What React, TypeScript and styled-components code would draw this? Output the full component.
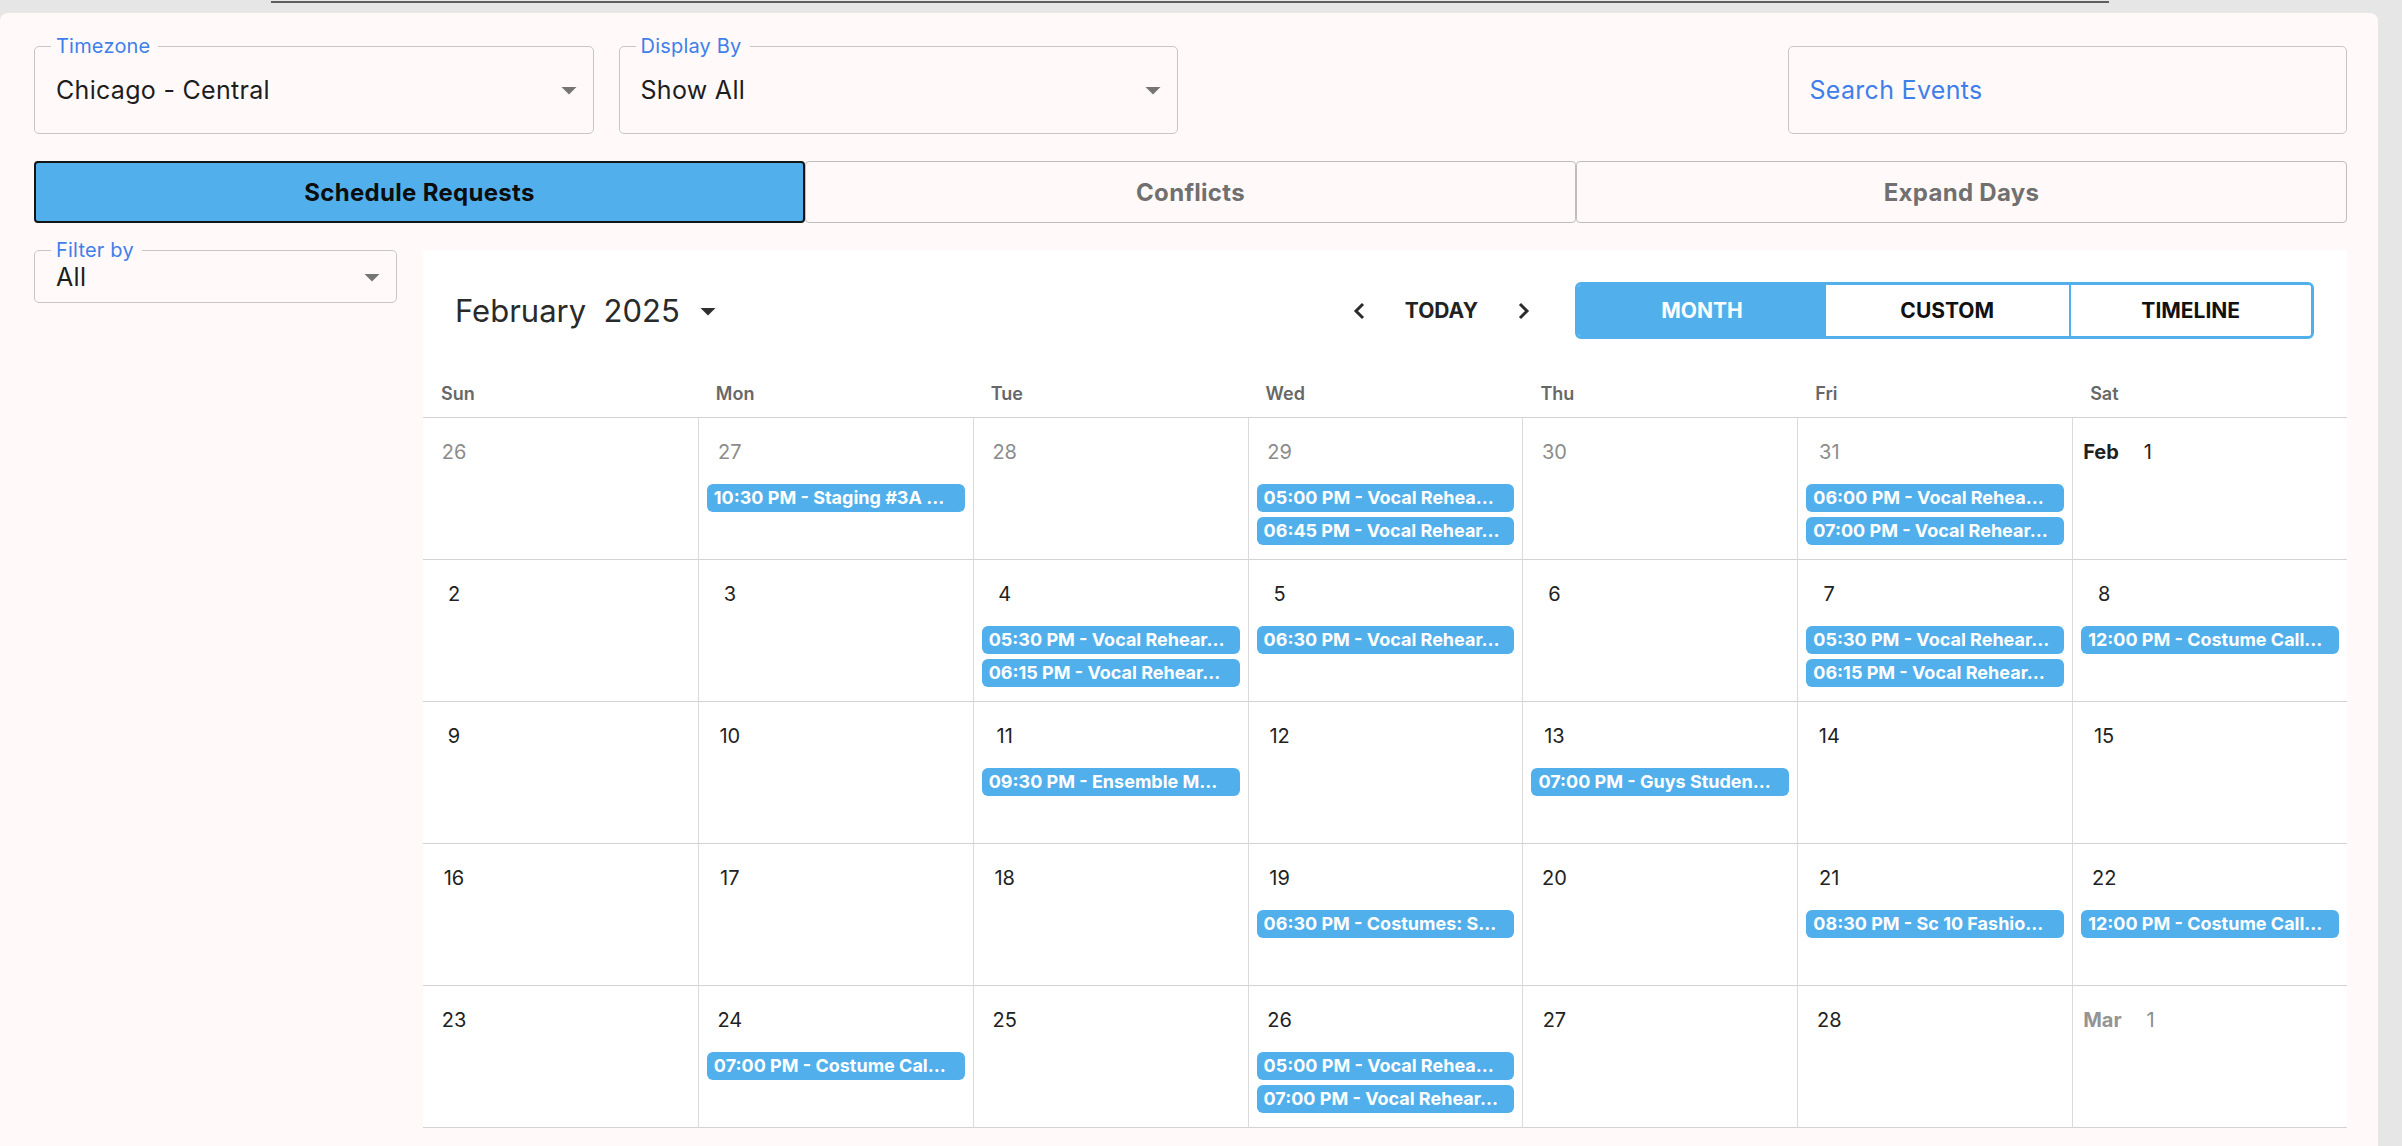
import React from "react";
import styled, { createGlobalStyle } from "styled-components";

const BLUE = "#51b0ec";
const LABEL_BLUE = "#3f7fe9";
const CARD_BG = "#fffaf9";
const FONT = `"Inter", "DejaVu Sans", sans-serif`;

const GlobalStyle = createGlobalStyle`
  html, body {
    margin: 0;
    padding: 0;
    background: #e6e6e6;
    font-family: ${FONT};
  }
  * { box-sizing: border-box; }
`;

const Page = styled.div`
  display: flex;
  flex-direction: column;
  min-height: 1146px;
`;

const TopStrip = styled.div`
  height: 13px;
  padding-top: 1px;
`;

const ScrollThumb = styled.div`
  margin-left: 271px;
  width: 1838px;
  height: 2px;
  background: #5e5e5e;
`;

const Card = styled.main`
  flex: 1;
  margin-right: 24px;
  background: ${CARD_BG};
  border-radius: 8px 8px 0 0;
  padding: 33px 31px 0 34px;
`;

const FilterGrid = styled.div`
  display: grid;
  grid-template-columns: repeat(4, 1fr);
  gap: 25px;
`;

const Field = styled.div<{ $height: number }>`
  position: relative;
  height: ${(p) => p.$height}px;
  border: 1.5px solid #c6c6c6;
  border-radius: 5px;
  display: flex;
  align-items: center;
  padding: 0 6px 0 21px;
`;

const FloatLabel = styled.span`
  position: absolute;
  top: -13px;
  left: 16px;
  padding: 0 8px 0 5px;
  background: ${CARD_BG};
  color: ${LABEL_BLUE};
  font-size: 20px;
  letter-spacing: 0.2px;
  line-height: 24px;
`;

const FieldValue = styled.span<{ $muted?: boolean }>`
  flex: 1;
  font-size: 25px;
  letter-spacing: 0.3px;
  color: ${(p) => (p.$muted ? LABEL_BLUE : "#1d1d1d")};
`;

const Caret = ({ color = "#757575" }: { color?: string }) => (
  <svg width="36" height="36" viewBox="0 0 24 24" aria-hidden="true">
    <path d="M7 10l5 5 5-5z" fill={color} />
  </svg>
);

const Select = ({
  label,
  value,
  height = 88,
}: {
  label: string;
  value: string;
  height?: number;
}) => (
  <Field $height={height}>
    <FloatLabel>{label}</FloatLabel>
    <FieldValue>{value}</FieldValue>
    <Caret />
  </Field>
);

const TabRow = styled.div`
  margin-top: 27px;
  display: grid;
  grid-template-columns: repeat(3, 1fr);
  height: 62px;
`;

const Tab = styled.button<{ $active?: boolean }>`
  font-family: ${FONT};
  font-size: 24px;
  letter-spacing: 0.3px;
  font-weight: 700;
  border-radius: 4px;
  cursor: pointer;
  background: ${(p) => (p.$active ? BLUE : CARD_BG)};
  color: ${(p) => (p.$active ? "#0d0d0d" : "#707070")};
  border: ${(p) => (p.$active ? "2px solid #151515" : "1.5px solid #bdbdbd")};
`;

const Body = styled.div`
  margin-top: 27px;
  display: flex;
  gap: 26px;
  align-items: flex-start;
`;

const Sidebar = styled.aside`
  width: 363px;
  flex: none;
`;

const Calendar = styled.section`
  flex: 1;
  background: #ffffff;
  padding-top: 32px;
`;

const Toolbar = styled.div`
  height: 57px;
  padding: 0 33px 0 32px;
  display: flex;
  align-items: center;
  justify-content: space-between;
`;

const MonthTitle = styled.button`
  display: flex;
  align-items: center;
  gap: 10px;
  border: none;
  background: none;
  padding: 0;
  font-family: ${FONT};
  font-size: 31px;
  color: #2a2a2a;
  white-space: pre;
  cursor: pointer;
`;

const Controls = styled.div`
  display: flex;
  align-items: center;
  height: 100%;
`;

const Nav = styled.div`
  display: flex;
  align-items: center;
  margin-right: 29px;
`;

const NavArrow = styled.button`
  width: 44px;
  height: 44px;
  border: none;
  background: none;
  display: flex;
  align-items: center;
  justify-content: center;
  cursor: pointer;
`;

const TodayButton = styled.button`
  border: none;
  background: none;
  padding: 0 24px;
  font-family: ${FONT};
  font-size: 21px;
  font-weight: 700;
  color: #222;
  cursor: pointer;
`;

const Chevron = ({ dir }: { dir: "left" | "right" }) => (
  <svg width="12" height="18" viewBox="0 0 12 18" aria-hidden="true">
    <polyline
      points={dir === "left" ? "10,2 3,9 10,16" : "2,2 9,9 2,16"}
      fill="none"
      stroke="#2b2b2b"
      strokeWidth="3"
    />
  </svg>
);

const ViewSwitch = styled.div`
  width: 739px;
  height: 57px;
  border: 3px solid ${BLUE};
  border-radius: 6px;
  overflow: hidden;
  display: grid;
  grid-template-columns: 248px 1fr 1fr;
`;

const ViewButton = styled.button<{ $active?: boolean; $divider?: boolean }>`
  border: none;
  border-left: ${(p) => (p.$divider ? `2px solid ${BLUE}` : "none")};
  background: ${(p) => (p.$active ? BLUE : "#ffffff")};
  color: ${(p) => (p.$active ? "#ffffff" : "#111111")};
  font-family: ${FONT};
  font-size: 21px;
  font-weight: 700;
  cursor: pointer;
`;

const WeekHeader = styled.div`
  margin-top: 31px;
  height: 48px;
  display: grid;
  grid-template-columns: repeat(7, 1fr);
  border-bottom: 1px solid #d2d2d2;
`;

const WeekDay = styled.div`
  display: flex;
  align-items: center;
  padding-left: 18px;
  font-size: 18px;
  font-weight: 600;
  color: #676767;
`;

const MonthGrid = styled.div`
  display: grid;
  grid-template-columns: repeat(7, 1fr);
  grid-auto-rows: 142px;
`;

const DayCell = styled.div<{ $first?: boolean }>`
  border-bottom: 1px solid #d2d2d2;
  border-left: ${(p) => (p.$first ? "none" : "1px solid #dadada")};
  padding: 20px 8px 0 8px;
  display: flex;
  flex-direction: column;
  min-width: 0;
`;

const DateLine = styled.div`
  height: 28px;
  display: flex;
  align-items: center;
  padding-left: 2px;
`;

const MonthPrefix = styled.span<{ $muted?: boolean }>`
  font-size: 20px;
  font-weight: 700;
  color: ${(p) => (p.$muted ? "#949494" : "#1f1f1f")};
  margin-right: 8px;
`;

const DayNumber = styled.span<{ $muted?: boolean }>`
  width: 42px;
  text-align: center;
  font-size: 20px;
  color: ${(p) => (p.$muted ? "#8c8c8c" : "#222222")};
`;

const Events = styled.div`
  margin-top: 18px;
  display: flex;
  flex-direction: column;
  gap: 5px;
`;

const EventChip = styled.div`
  height: 28px;
  line-height: 28px;
  padding: 0 6px 0 7px;
  border-radius: 6px;
  background: ${BLUE};
  color: #ffffff;
  font-size: 18px;
  font-weight: 700;
  white-space: nowrap;
  overflow: hidden;
`;

type Day = {
  key: string;
  day: number;
  muted: boolean;
  prefix?: string;
};

const buildDays = (): Day[] => {
  const days: Day[] = [];
  for (let d = 26; d <= 31; d++) days.push({ key: `1-${d}`, day: d, muted: true });
  for (let d = 1; d <= 28; d++)
    days.push({ key: `2-${d}`, day: d, muted: false, prefix: d === 1 ? "Feb" : undefined });
  days.push({ key: "3-1", day: 1, muted: true, prefix: "Mar" });
  return days;
};

// Event labels as the month view lists them, already shortened to the chip width.
const events: Record<string, string[]> = {
  "1-27": ["10:30 PM - Staging #3A …"],
  "1-29": ["05:00 PM - Vocal Rehea…", "06:45 PM - Vocal Rehear…"],
  "1-31": ["06:00 PM - Vocal Rehea…", "07:00 PM - Vocal Rehear…"],
  "2-4": ["05:30 PM - Vocal Rehear…", "06:15 PM - Vocal Rehear…"],
  "2-5": ["06:30 PM - Vocal Rehear…"],
  "2-7": ["05:30 PM - Vocal Rehear…", "06:15 PM - Vocal Rehear…"],
  "2-8": ["12:00 PM - Costume Call…"],
  "2-11": ["09:30 PM - Ensemble M…"],
  "2-13": ["07:00 PM - Guys Studen…"],
  "2-19": ["06:30 PM - Costumes: S…"],
  "2-21": ["08:30 PM - Sc 10 Fashio…"],
  "2-22": ["12:00 PM - Costume Call…"],
  "2-24": ["07:00 PM - Costume Cal…"],
  "2-26": ["05:00 PM - Vocal Rehea…", "07:00 PM - Vocal Rehear…"],
};

const WEEKDAYS = ["Sun", "Mon", "Tue", "Wed", "Thu", "Fri", "Sat"];

export default function App() {
  const days = buildDays();
  return (
    <>
      <GlobalStyle />
      <Page>
        <TopStrip>
          <ScrollThumb />
        </TopStrip>
        <Card>
          <FilterGrid>
            <Select label="Timezone" value="Chicago - Central" />
            <Select label="Display By" value="Show All" />
            <div />
            <Field $height={88}>
              <FieldValue $muted>Search Events</FieldValue>
            </Field>
          </FilterGrid>

          <TabRow>
            <Tab $active>Schedule Requests</Tab>
            <Tab>Conflicts</Tab>
            <Tab>Expand Days</Tab>
          </TabRow>

          <Body>
            <Sidebar>
              <Select label="Filter by" value="All" height={53} />
            </Sidebar>

            <Calendar>
              <Toolbar>
                <MonthTitle>
                  {"February  2025"}
                  <Caret color="#2f2f2f" />
                </MonthTitle>
                <Controls>
                  <Nav>
                    <NavArrow aria-label="Previous month">
                      <Chevron dir="left" />
                    </NavArrow>
                    <TodayButton>TODAY</TodayButton>
                    <NavArrow aria-label="Next month">
                      <Chevron dir="right" />
                    </NavArrow>
                  </Nav>
                  <ViewSwitch>
                    <ViewButton $active>MONTH</ViewButton>
                    <ViewButton>CUSTOM</ViewButton>
                    <ViewButton $divider>TIMELINE</ViewButton>
                  </ViewSwitch>
                </Controls>
              </Toolbar>

              <WeekHeader>
                {WEEKDAYS.map((w) => (
                  <WeekDay key={w}>{w}</WeekDay>
                ))}
              </WeekHeader>

              <MonthGrid>
                {days.map((d, i) => (
                  <DayCell key={d.key} $first={i % 7 === 0}>
                    <DateLine>
                      {d.prefix && <MonthPrefix $muted={d.muted}>{d.prefix}</MonthPrefix>}
                      <DayNumber $muted={d.muted}>{d.day}</DayNumber>
                    </DateLine>
                    {events[d.key] && (
                      <Events>
                        {events[d.key].map((e, j) => (
                          <EventChip key={j}>{e}</EventChip>
                        ))}
                      </Events>
                    )}
                  </DayCell>
                ))}
              </MonthGrid>
            </Calendar>
          </Body>
        </Card>
      </Page>
    </>
  );
}
